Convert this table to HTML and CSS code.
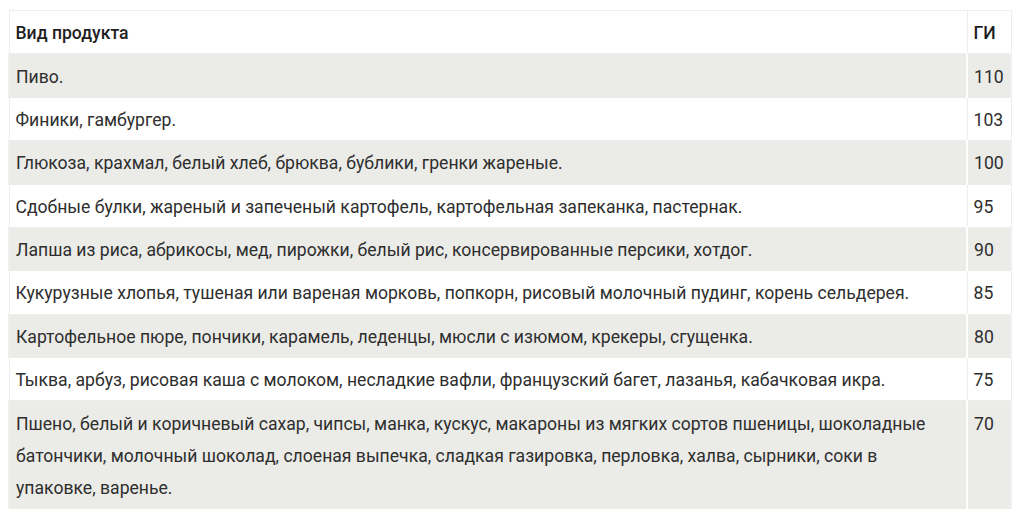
FILE: index.html
```html
<!DOCTYPE html>
<html lang="ru">
<head>
<meta charset="utf-8">
<link rel="stylesheet" href="styles.css">
</head>
<body>
<table class="gi-table">
  <thead>
    <tr><th class="col-name">Вид продукта</th><th class="col-gi">ГИ</th></tr>
  </thead>
  <tbody>
    <tr class="alt"><td>Пиво.</td><td>110</td></tr>
    <tr><td>Финики, гамбургер.</td><td>103</td></tr>
    <tr class="alt"><td>Глюкоза, крахмал, белый хлеб, брюква, бублики, гренки жареные.</td><td>100</td></tr>
    <tr><td>Сдобные булки, жареный и запеченый картофель, картофельная запеканка, пастернак.</td><td>95</td></tr>
    <tr class="alt"><td>Лапша из риса, абрикосы, мед, пирожки, белый рис, консервированные персики, хотдог.</td><td>90</td></tr>
    <tr><td>Кукурузные хлопья, тушеная или вареная морковь, попкорн, рисовый молочный пудинг, корень сельдерея.</td><td>85</td></tr>
    <tr class="alt"><td>Картофельное пюре, пончики, карамель, леденцы, мюсли с изюмом, крекеры, сгущенка.</td><td>80</td></tr>
    <tr><td>Тыква, арбуз, рисовая каша с молоком, несладкие вафли, французский багет, лазанья, кабачковая икра.</td><td>75</td></tr>
    <tr class="alt"><td>Пшено, белый и коричневый сахар, чипсы, манка, кускус, макароны из мягких сортов пшеницы, шоколадные батончики, молочный шоколад, слоеная выпечка, сладкая газировка, перловка, халва, сырники, соки в упаковке, варенье.</td><td>70</td></tr>
  </tbody>
</table>
</body>
</html>
```

FILE: styles.css
```css
html, body {
  margin: 0;
  padding: 0;
  background: #ffffff;
}
body {
  padding: 10px 12px 0 8px;
  font-family: Roboto, "Liberation Sans", sans-serif;
  font-size: 17.6px;
  color: #2e2e2e;
}
.gi-table {
  width: 1004px;
  border-collapse: collapse;
  border: 1px solid #efefef;
  table-layout: fixed;
}
.gi-table th,
.gi-table td {
  text-align: left;
  vertical-align: top;
  padding: 6.2px 7px 4.2px 6px;
  line-height: 32px;
  border: 1px solid #eeeeee;
}
.gi-table th {
  font-weight: 500;
  color: #1f1f1f;
}
.col-name { width: auto; }
.col-gi { width: 30px; }
.gi-table tr.alt td {
  background: #ebebe8;
  border-left: 2px solid #ffffff;
  border-right: 2px solid #ffffff;
  border-top-color: #ebebe8;
  border-bottom-color: #ebebe8;
}
.gi-table tr.alt td:first-child { border-left-color: #efefef; }
.gi-table tr.alt td:last-child { border-right-color: #efefef; }
```
